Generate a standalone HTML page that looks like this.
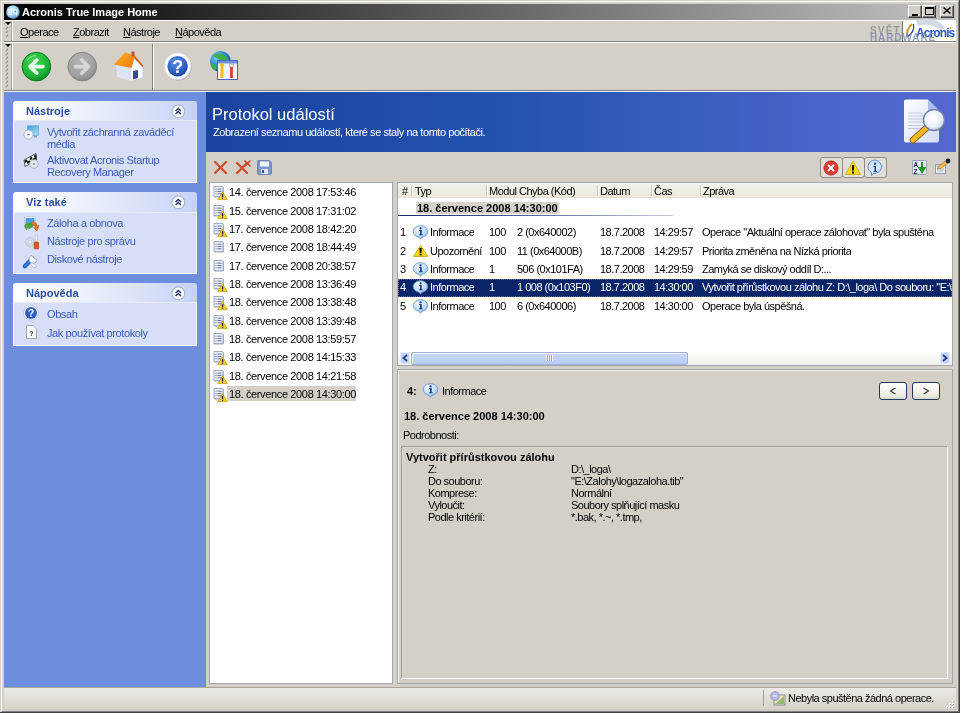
<!DOCTYPE html>
<html><head><meta charset="utf-8">
<style>
*{box-sizing:border-box;margin:0;padding:0}
html,body{width:960px;height:713px;overflow:hidden;background:#d4d0c8;font-family:"Liberation Sans",sans-serif;font-size:11px;color:#000}
.a{position:absolute}
body{will-change:transform}
.t{position:absolute;white-space:nowrap;line-height:13px;font-size:11px;letter-spacing:-0.5px}
.b{font-weight:bold;letter-spacing:0}
svg{position:absolute;overflow:visible}
</style></head><body>
<!-- window frame -->
<div class="a" style="left:0;top:0;width:960px;height:713px;border-top:1px solid #d4d0c8;border-left:1px solid #d4d0c8;"></div>
<div class="a" style="left:1px;top:1px;width:958px;height:711px;border-top:1px solid #fff;border-left:1px solid #fff;border-right:1px solid #808080;border-bottom:1px solid #808080"></div>
<div class="a" style="left:0;top:0;width:960px;height:713px;border-right:1px solid #404040;border-bottom:1px solid #404040"></div>

<!-- title bar -->
<div class="a" style="left:4px;top:4px;width:952px;height:16px;background:linear-gradient(to right,#000 0%,#c3c3c3 100%)"></div>
<svg style="left:6px;top:5px" width="14" height="14"><defs><radialGradient id="gi" cx="40%" cy="35%" r="70%"><stop offset="0" stop-color="#d8f2ff"/><stop offset="0.6" stop-color="#98cdf0"/><stop offset="1" stop-color="#4f8fc6"/></radialGradient></defs><circle cx="7" cy="7" r="6.8" fill="url(#gi)"/><path d="M3 4.5H5.5V9.5H3ZM3 7H5.5M7.5 5H11V8H7.5ZM10.5 8V10.5" fill="none" stroke="#e8fbff" stroke-width="1.2"/><rect x="8.5" y="6" width="1.5" height="1.2" fill="#4a9aa8"/></svg>
<div class="t b" style="left:22px;top:6px;color:#fff">Acronis True Image Home</div>
<!-- caption buttons -->
<div class="a" style="left:908px;top:5px;width:14px;height:13px;background:#d4d0c8;border-top:1px solid #fff;border-left:1px solid #fff;border-right:1px solid #404040;border-bottom:1px solid #404040;box-shadow:inset -1px -1px #808080"></div>
<div class="a" style="left:912px;top:14px;width:6px;height:2px;background:#000"></div>
<div class="a" style="left:922px;top:5px;width:14px;height:13px;background:#d4d0c8;border-top:1px solid #fff;border-left:1px solid #fff;border-right:1px solid #404040;border-bottom:1px solid #404040;box-shadow:inset -1px -1px #808080"></div>
<div class="a" style="left:925px;top:7px;width:9px;height:8px;border:1px solid #000;border-top-width:2px"></div>
<div class="a" style="left:940px;top:5px;width:14px;height:13px;background:#d4d0c8;border-top:1px solid #fff;border-left:1px solid #fff;border-right:1px solid #404040;border-bottom:1px solid #404040;box-shadow:inset -1px -1px #808080"></div>
<svg style="left:943px;top:7px" width="8" height="7"><path d="M0.5 0.5L7.5 6.5M7.5 0.5L0.5 6.5" stroke="#000" stroke-width="1.6"/></svg>

<!-- menu band -->
<div class="a" style="left:4px;top:20px;width:952px;height:1px;background:#fff"></div>
<div class="a" style="left:4px;top:41px;width:952px;height:1px;background:#808080"></div>
<div class="a" style="left:4px;top:42px;width:952px;height:1px;background:#fff"></div>
<div class="t" style="left:20px;top:26px"><u>O</u>perace</div>
<div class="t" style="left:73px;top:26px"><u>Z</u>obrazit</div>
<div class="t" style="left:123px;top:26px"><u>N</u>ástroje</div>
<div class="t" style="left:175px;top:26px"><u>N</u>ápověda</div>


<!-- acronis logo -->
<div class="a" style="left:902px;top:21px;width:54px;height:20px;background:#fff"></div>
<div class="a" style="left:902px;top:21px;width:1px;height:20px;background:#6e6e6e"></div>
<svg style="left:903px;top:21px" width="52" height="20"><path d="M14 2Q30 -2 40 8" fill="none" stroke="#cfd6e2" stroke-width="6" opacity="0.9"/><path d="M9 3Q3 9 4 15" fill="none" stroke="#d49a2a" stroke-width="2.2"/><path d="M10.5 3Q12 11 4 16" fill="none" stroke="#2a3f9a" stroke-width="1.2"/><text x="13" y="16" font-family="Liberation Sans" font-size="12" font-weight="bold" fill="#2b55c4" letter-spacing="-0.9">Acronis</text><circle cx="47.5" cy="7" r="1" fill="#a8c23a"/></svg>
<div class="t b" style="left:870px;top:25px;font-size:10px;line-height:11px;color:rgba(150,150,155,0.9);letter-spacing:1.2px">SVĚT</div>
<div class="t b" style="left:870px;top:32px;font-size:10px;line-height:11px;color:rgba(125,140,172,0.8);letter-spacing:0.9px">HARDWARE</div>
<!-- toolbar band -->
<div class="a" style="left:4px;top:90px;width:952px;height:1px;background:#808080"></div>
<div class="a" style="left:152px;top:44px;width:1px;height:46px;background:#808080"></div>
<div class="a" style="left:153px;top:44px;width:1px;height:46px;background:#fff"></div>


<!-- rebar grips -->
<div class="a" style="left:11px;top:21px;width:1px;height:20px;background:#a0a0a0"></div>
<div class="a" style="left:12px;top:21px;width:1px;height:20px;background:#fff"></div>
<div class="a" style="left:11px;top:43px;width:1px;height:47px;background:#a0a0a0"></div>
<div class="a" style="left:12px;top:43px;width:1px;height:47px;background:#fff"></div>
<svg style="left:5px;top:22px" width="6" height="4"><path d="M0 0H6L3 3Z" fill="#000"/></svg>
<svg style="left:5px;top:44px" width="6" height="4"><path d="M0 0H6L3 3Z" fill="#000"/></svg>



<svg style="left:0;top:0" width="12" height="100"><path d="M6 29L8 27M6 33L8 31M6 37L8 35" stroke="#8c8c8c" stroke-width="1.1"/></svg><svg style="left:0;top:0" width="12" height="100"><path d="M6 51L8 49M6 55L8 53M6 59L8 57M6 63L8 61M6 67L8 65M6 71L8 69M6 75L8 73M6 79L8 77M6 83L8 81M6 87L8 85" stroke="#8c8c8c" stroke-width="1.1"/></svg>
<!-- toolbar icons -->
<svg style="left:21px;top:52px" width="31" height="31"><defs><radialGradient id="gg" cx="40%" cy="30%" r="75%"><stop offset="0" stop-color="#3fd455"/><stop offset="0.7" stop-color="#1bb536"/><stop offset="1" stop-color="#0a8420"/></radialGradient></defs><circle cx="15.4" cy="14.6" r="14.3" fill="url(#gg)" stroke="#087a1a" stroke-width="1"/><path d="M6 9Q9 3.5 15 3.3" fill="none" stroke="#8ff09a" stroke-width="1.2" opacity="0.7"/><path d="M9 14.6H22M15.8 8L9 14.6L15.8 21.2" fill="none" stroke="#eaffea" stroke-width="3.6" stroke-linecap="round" stroke-linejoin="round"/></svg>
<svg style="left:67px;top:52px" width="31" height="31"><defs><radialGradient id="gr" cx="40%" cy="30%" r="75%"><stop offset="0" stop-color="#b4b4b4"/><stop offset="0.7" stop-color="#a0a0a0"/><stop offset="1" stop-color="#858585"/></radialGradient></defs><circle cx="15.3" cy="14.6" r="14.3" fill="url(#gr)" stroke="#848484" stroke-width="1"/><path d="M8.5 14.6H21.5M14.7 8L21.5 14.6L14.7 21.2" fill="none" stroke="#d6d6d6" stroke-width="3.6" stroke-linecap="round" stroke-linejoin="round"/></svg>
<svg style="left:113px;top:50px" width="32" height="33"><defs><linearGradient id="rf" x1="0" y1="0" x2="1" y2="1"><stop offset="0" stop-color="#ffb020"/><stop offset="1" stop-color="#f07a10"/></linearGradient></defs>
<path d="M3 15L18 17.5V31L4 27Z" fill="#dde4f4"/>
<path d="M18 17.5L21.5 7L29.5 16.5V27.5L18 31Z" fill="#ffffff"/>
<path d="M18 17.5L21.5 7L29.5 16.5V27.5L18 31Z" fill="none" stroke="#c9d2e6" stroke-width="0.6"/>
<path d="M1 14.5L12 2.5L22 6L18.5 18Z" fill="url(#rf)"/>
<path d="M22 6L30.5 16L29.5 17L21 8Z" fill="#c85a1c"/>
<rect x="18.5" y="1.5" width="3" height="5" fill="#c0502a"/>
<path d="M20 29.5V21L25 20V28Z" fill="#3b4a8a"/>
</svg>
<svg style="left:163px;top:52px" width="31" height="31"><defs><radialGradient id="gh" cx="40%" cy="30%" r="75%"><stop offset="0" stop-color="#5d8fe6"/><stop offset="0.65" stop-color="#2f5ec4"/><stop offset="1" stop-color="#1d3f9a"/></radialGradient></defs><circle cx="15.2" cy="14.9" r="13.5" fill="#6b6b6b" opacity="0.35"/><circle cx="14.6" cy="14.2" r="13.4" fill="#fbfdff" stroke="#c9d3e6" stroke-width="0.6"/><circle cx="14.6" cy="14.2" r="10.2" fill="url(#gh)"/><text x="14.8" y="20.6" text-anchor="middle" font-family="Liberation Sans" font-weight="bold" font-size="18" fill="#fff">?</text></svg>
<svg style="left:208px;top:50px" width="32" height="32"><defs><radialGradient id="gw" cx="35%" cy="30%" r="75%"><stop offset="0" stop-color="#7fdcff"/><stop offset="0.5" stop-color="#2a8ad8"/><stop offset="1" stop-color="#134f9e"/></radialGradient></defs><circle cx="12.5" cy="11.5" r="10.5" fill="url(#gw)"/><path d="M5 6Q9 2 14 4T20 9Q17 13 12 10T5 6Z" fill="#3fb046"/><path d="M3 14Q6 12 8 16T6 20Q3 18 3 14Z" fill="#3fb046"/>
<rect x="9.5" y="10.5" width="20" height="19" fill="#f4f6fc" stroke="#4668b8" stroke-width="1"/><rect x="10" y="11" width="19" height="2.5" fill="#6f8fd6"/>
<path d="M14 15V28" stroke="#f0c020" stroke-width="3"/><path d="M12 15.5Q14 13 16 15.5" stroke="#f0c020" stroke-width="2" fill="none"/>
<path d="M23.5 14V28" stroke="#d23a24" stroke-width="2.6"/><rect x="21.5" y="14" width="4" height="3" fill="#e8e8e8" stroke="#888" stroke-width="0.5"/></svg>

<!-- left task pane -->
<div class="a" style="left:4px;top:91px;width:952px;height:1px;background:#f4f4f8"></div><div class="a" style="left:4px;top:92px;width:202px;height:595px;background:#6d8ddf"></div>


<div class="a" style="left:13px;top:101px;width:184px;height:19px;border-radius:3px 3px 0 0;background:linear-gradient(to right,#fff 0%,#e9eefb 45%,#c6d3f7 100%)"></div>
<div class="a" style="left:13px;top:120px;width:184px;height:63px;background:#d6dff7;border:1px solid #fff;border-top:1px solid #e4eafb"></div>
<div class="t b" style="left:26px;top:105px;color:#2c4fa0">Nástroje</div>
<svg style="left:171px;top:104px" width="15" height="15"><circle cx="7.3" cy="7.3" r="6.4" fill="#fff" stroke="#aebad4" stroke-width="1.2"/><path d="M4.6 7L7.3 4.5L10 7M4.6 10L7.3 7.5L10 10" fill="none" stroke="#1f3163" stroke-width="1.4"/></svg>
<div class="a" style="left:13px;top:192px;width:184px;height:20px;border-radius:3px 3px 0 0;background:linear-gradient(to right,#fff 0%,#e9eefb 45%,#c6d3f7 100%)"></div>
<div class="a" style="left:13px;top:212px;width:184px;height:62px;background:#d6dff7;border:1px solid #fff;border-top:1px solid #e4eafb"></div>
<div class="t b" style="left:26px;top:196px;color:#2c4fa0">Viz také</div>
<svg style="left:171px;top:195px" width="15" height="15"><circle cx="7.3" cy="7.3" r="6.4" fill="#fff" stroke="#aebad4" stroke-width="1.2"/><path d="M4.6 7L7.3 4.5L10 7M4.6 10L7.3 7.5L10 10" fill="none" stroke="#1f3163" stroke-width="1.4"/></svg>
<div class="a" style="left:13px;top:283px;width:184px;height:19px;border-radius:3px 3px 0 0;background:linear-gradient(to right,#fff 0%,#e9eefb 45%,#c6d3f7 100%)"></div>
<div class="a" style="left:13px;top:302px;width:184px;height:44px;background:#d6dff7;border:1px solid #fff;border-top:1px solid #e4eafb"></div>
<div class="t b" style="left:26px;top:287px;color:#2c4fa0">Nápověda</div>
<svg style="left:171px;top:286px" width="15" height="15"><circle cx="7.3" cy="7.3" r="6.4" fill="#fff" stroke="#aebad4" stroke-width="1.2"/><path d="M4.6 7L7.3 4.5L10 7M4.6 10L7.3 7.5L10 10" fill="none" stroke="#1f3163" stroke-width="1.4"/></svg>
<div class="t" style="left:47px;top:126px;color:#3b5bb5;line-height:12px;letter-spacing:-0.4px">Vytvořit záchranná zaváděcí<br>média</div>
<div class="t" style="left:47px;top:154px;color:#3b5bb5;line-height:12px;letter-spacing:-0.4px">Aktivovat Acronis Startup<br>Recovery Manager</div>
<div class="t" style="left:47px;top:217px;color:#3b5bb5;letter-spacing:-0.4px">Záloha a obnova</div>
<div class="t" style="left:47px;top:235px;color:#3b5bb5;letter-spacing:-0.4px">Nástroje pro správu</div>
<div class="t" style="left:47px;top:253px;color:#3b5bb5;letter-spacing:-0.4px">Diskové nástroje</div>
<div class="t" style="left:47px;top:308px;color:#3b5bb5;letter-spacing:-0.4px">Obsah</div>
<div class="t" style="left:47px;top:327px;color:#3b5bb5;letter-spacing:-0.4px">Jak používat protokoly</div>
<!-- pane icons -->
<svg style="left:23px;top:125px" width="17" height="16"><defs><linearGradient id="scr" x1="0" y1="0" x2="1" y2="1"><stop offset="0" stop-color="#3d9bd8"/><stop offset="1" stop-color="#a9e4fa"/></linearGradient></defs><rect x="4.5" y="0.8" width="11" height="9.5" fill="url(#scr)" stroke="#6aa6d6" stroke-width="0.8"/><rect x="11" y="10.5" width="3" height="2" fill="#8aa4c0"/><circle cx="5.5" cy="9.6" r="4.6" fill="#f2f6fb" stroke="#93a9c6" stroke-width="0.8"/><rect x="4.3" y="9" width="2.4" height="1.2" fill="#6d7f99"/></svg>
<svg style="left:23px;top:153px" width="17" height="16"><path d="M1 7L13 0.5L13.5 7L2 13.5Z" fill="#fff" stroke="#1a1a1a" stroke-width="0.7"/><path d="M1.5 7.5L4 6.2L4.5 8.6L2 10ZM6.5 4.8L9 3.5L9.4 5.9L6.9 7.2ZM11 2.4L13.1 1.3L13.3 3.7L11.3 4.8ZM4 8.6L6.9 7.2L7.2 9.6L4.3 11ZM9.4 5.9L13.3 3.7L13.4 6L9.8 8.3Z" fill="#111"/><circle cx="11" cy="11" r="4.3" fill="#e6e9ee" stroke="#9aa2ae" stroke-width="0.8"/><circle cx="11" cy="11" r="1" fill="#7a828e"/></svg>
<svg style="left:23px;top:216px" width="17" height="17"><rect x="1.5" y="1" width="11" height="10" fill="#fff" stroke="#b9c2d6" stroke-width="0.7"/><rect x="2.5" y="2" width="9" height="8" fill="#4aa0e8"/><rect x="2.5" y="7" width="9" height="3" fill="#5fb85a"/><path d="M1.5 10Q3 7 7 8.5L6.5 7L10 10.5L5.5 13L6.5 11Q4 10.5 3.5 14Z" fill="#4cae3a" stroke="#2f7a22" stroke-width="0.5"/><path d="M8.5 6Q13 5 14.5 10L16 9.5L14 15L10.5 11.5L12.5 11.2Q11.5 8 8.5 8.5Z" fill="#e8762a" stroke="#a94d14" stroke-width="0.5"/></svg>
<svg style="left:23px;top:234px" width="17" height="17"><circle cx="7" cy="8" r="5" fill="none" stroke="#d7dbe4" stroke-width="2.6" stroke-dasharray="2.2 1.3"/><circle cx="7" cy="8" r="4.2" fill="none" stroke="#aeb4c2" stroke-width="0.6"/><circle cx="7" cy="8" r="2" fill="#eef0f5" stroke="#aeb4c2" stroke-width="0.6"/><rect x="12.3" y="1" width="2" height="7" rx="1" fill="#f2f2f5" stroke="#a8adb8" stroke-width="0.5"/><rect x="11" y="8" width="4.6" height="7" rx="1" fill="#e0541e" stroke="#a83a12" stroke-width="0.5"/></svg>
<svg style="left:23px;top:252px" width="17" height="17"><path d="M9 10L14 14.5Q12 16.5 10 15L6 11Z" fill="#f4f6fa" stroke="#9aa3b5" stroke-width="0.6"/><path d="M1.8 14.2L9.5 6.5" stroke="#1d5cb8" stroke-width="4.2" stroke-linecap="round"/><path d="M1.8 14.2L9.5 6.5" stroke="#3f8fe0" stroke-width="1.6" stroke-linecap="round"/><path d="M9 3.5A4 4 0 1 0 14 7.5L12 7L10.5 5.5Z" fill="#f4f6fa" stroke="#8d97ab" stroke-width="0.7"/></svg>
<svg style="left:23px;top:305px" width="16" height="16"><circle cx="8" cy="8" r="7.3" fill="#fff" stroke="#9fb0cf" stroke-width="0.6"/><circle cx="8" cy="8" r="6" fill="#2f5fc4"/><text x="8" y="12" text-anchor="middle" font-family="Liberation Sans" font-weight="bold" font-size="10" fill="#fff">?</text></svg>
<svg style="left:24px;top:324px" width="16" height="16"><path d="M2.5 1.5H9L12.5 5V14.5H2.5Z" fill="#fff" stroke="#8c94a4" stroke-width="0.8"/><text x="7.3" y="12" text-anchor="middle" font-family="Liberation Sans" font-weight="bold" font-size="7" fill="#333">?</text></svg>

<!-- header -->
<div class="a" style="left:206px;top:92px;width:750px;height:60px;background:linear-gradient(to right,#1a449f 0%,#2452b0 40%,#4a66cc 85%,#5468cf 100%)"></div>
<div class="t" style="left:212px;top:105px;font-size:16.5px;line-height:19px;color:#fff;letter-spacing:0">Protokol událostí</div>
<div class="t" style="left:213px;top:126px;color:#fff;letter-spacing:-0.45px">Zobrazení seznamu událostí, které se staly na tomto počítači.</div>


<svg style="left:903px;top:98px" width="50" height="48"><defs><linearGradient id="dg" x1="0" y1="0" x2="1" y2="1"><stop offset="0" stop-color="#ffffff"/><stop offset="1" stop-color="#d5dcf6"/></linearGradient><radialGradient id="mg" cx="45%" cy="40%" r="60%"><stop offset="0" stop-color="#ffffff"/><stop offset="0.7" stop-color="#e8f0fb"/><stop offset="1" stop-color="#b9c9e6"/></radialGradient></defs>
<path d="M3 1.5H25L36 12.5V42.5Q36 44.5 34 44.5H3Q1 44.5 1 42.5V3.5Q1 1.5 3 1.5Z" fill="url(#dg)"/>
<path d="M25 1.5L36 12.5H27Q25 12.5 25 10.5Z" fill="#aebcec"/>
<path d="M5 15H20M5 18H20M5 21H20M5 24H20M5 27.5H20M5 30.5H18" stroke="#c2cbe6" stroke-width="1"/>
<path d="M24.5 29L10 42" stroke="#8a5a10" stroke-width="6.5" stroke-linecap="round"/>
<path d="M24.5 29L10 42" stroke="#f6b822" stroke-width="5" stroke-linecap="round"/>
<circle cx="31" cy="22" r="10.5" fill="url(#mg)" stroke="#6f7fb0" stroke-width="1.3"/>
</svg>

<!-- body -->
<!-- list box -->
<div class="a" style="left:209px;top:182px;width:184px;height:502px;background:#fff;border:1px solid #a2a6ad"></div>
<!-- table -->
<div class="a" style="left:397px;top:182px;width:556px;height:184px;background:#fff;border:1px solid #a2a6ad"></div>
<!-- details pane -->
<div class="a" style="left:397px;top:369px;width:556px;height:315px;border:1px solid #a2a6ad;box-shadow:inset 1px 1px #f4f3ef"></div>

<!-- body toolbar -->
<svg style="left:213px;top:160px" width="16" height="16"><path d="M2 2L13 13M13 2L2 13" stroke="#d24b2c" stroke-width="2.3" stroke-linecap="round"/></svg>
<svg style="left:235px;top:159px" width="17" height="17"><path d="M2 4L12 14M12 4L2 14" stroke="#d24b2c" stroke-width="2.3" stroke-linecap="round"/><path d="M9.5 1.5L15.5 7.5M15.5 1.5L9.5 7.5" stroke="#c8462a" stroke-width="1.5"/></svg>
<svg style="left:257px;top:160px" width="15" height="15"><path d="M0.5 1.5Q0.5 0.5 1.5 0.5H12.5L14.5 2.5V13.5Q14.5 14.5 13.5 14.5H1.5Q0.5 14.5 0.5 13.5Z" fill="#7d93cc" stroke="#6379b3" stroke-width="0.8"/><rect x="3" y="1.5" width="9" height="5" fill="#f4f6fb"/><rect x="4" y="9" width="7" height="5" fill="#dfe5f3"/><rect x="5" y="10" width="2" height="3" fill="#3a4d80"/></svg>

<div class="a" style="left:820px;top:157px;width:23px;height:21px;border:1px solid #8f8c86;border-radius:3px;background:#e2dfd8"></div>
<div class="a" style="left:842px;top:157px;width:23px;height:21px;border:1px solid #8f8c86;border-radius:3px;background:#e2dfd8"></div>
<div class="a" style="left:864px;top:157px;width:23px;height:21px;border:1px solid #8f8c86;border-radius:3px;background:#e2dfd8"></div>
<svg style="left:823px;top:160px" width="16" height="16"><circle cx="8" cy="8" r="7.2" fill="#d93a2e" stroke="#a8241c" stroke-width="0.6"/><path d="M5 5L11 11M11 5L5 11" stroke="#fff" stroke-width="2.2"/></svg>
<svg style="left:845px;top:160px" width="16" height="16"><path d="M8 1L15.5 14.5H0.5Z" fill="#f7dc1e" stroke="#c7a000" stroke-width="0.7"/><rect x="7" y="5" width="2" height="5.5" fill="#111"/><rect x="7" y="11.5" width="2" height="2" fill="#111"/></svg>
<svg style="left:866px;top:159px" width="18" height="17"><path d="M9 1A7.5 6.8 0 1 1 7 14.5L5.5 16.5L5.5 13.5A7.5 6.8 0 0 1 9 1Z" fill="#cfe6fb" stroke="#3f78c4" stroke-width="0.8"/><circle cx="9" cy="4.6" r="1.2" fill="#1a3f93"/><path d="M7.5 7H10V12H11V13H7.5V12H8.5V8H7.5Z" fill="#1a3f93"/></svg>
<svg style="left:912px;top:160px" width="15" height="15"><rect x="0.5" y="0.5" width="14" height="14" fill="#e2e8f4" stroke="#8895b0" stroke-width="0.8" rx="1"/><text x="1.5" y="7" font-family="Liberation Sans" font-weight="bold" font-size="6.5" fill="#223">A</text><text x="1.5" y="13.5" font-family="Liberation Sans" font-weight="bold" font-size="6.5" fill="#223">Z</text><path d="M10 2V10M7.5 8L10 12L12.5 8Z" stroke="#1c9a2a" stroke-width="2" fill="#1c9a2a"/></svg>
<svg style="left:934px;top:158px" width="17" height="17"><path d="M1.5 6.5H11.5V15.5H1.5Z" fill="#eef1f8" stroke="#8a93aa" stroke-width="0.9"/><rect x="2" y="7" width="9" height="2" fill="#c5cde3"/><path d="M3 11H10M3 13H9" stroke="#9aa6c6" stroke-width="0.9"/><path d="M4 9L11 3L13.5 5L7 10.5L3.5 11Z" fill="#f3b845" stroke="#a8741d" stroke-width="0.6"/><circle cx="14" cy="3" r="2.4" fill="#15224a"/></svg>

<!-- list box items -->
<svg style="left:213px;top:186px" width="15" height="15"><path d="M1 0.5H9.5L10.5 1.5V11H1Z" fill="#eaeef7" stroke="#8d97b3" stroke-width="0.8"/><path d="M10 1.5V10.5H1.5" fill="none" stroke="#aab2c8" stroke-width="1"/><path d="M2.5 3.2H3.5M4.5 3.2H8.5M2.5 5.5H3.5M4.5 5.5H8.5M2.5 7.8H3.5M4.5 7.8H8.5" stroke="#56689a" stroke-width="0.9"/><path d="M9.5 5.8L14.3 13.6H4.7Z" fill="#f3d41c" stroke="#b39300" stroke-width="0.7" stroke-linejoin="round"/><rect x="8.9" y="8.2" width="1.3" height="2.8" fill="#1a1a1a"/><rect x="8.9" y="11.6" width="1.3" height="1.2" fill="#1a1a1a"/></svg>
<div class="t" style="left:229px;top:186px;letter-spacing:-0.36px">14. července 2008 17:53:46</div>
<svg style="left:213px;top:205px" width="15" height="15"><path d="M1 0.5H9.5L10.5 1.5V11H1Z" fill="#eaeef7" stroke="#8d97b3" stroke-width="0.8"/><path d="M10 1.5V10.5H1.5" fill="none" stroke="#aab2c8" stroke-width="1"/><path d="M2.5 3.2H3.5M4.5 3.2H8.5M2.5 5.5H3.5M4.5 5.5H8.5M2.5 7.8H3.5M4.5 7.8H8.5" stroke="#56689a" stroke-width="0.9"/><path d="M9.5 5.8L14.3 13.6H4.7Z" fill="#f3d41c" stroke="#b39300" stroke-width="0.7" stroke-linejoin="round"/><rect x="8.9" y="8.2" width="1.3" height="2.8" fill="#1a1a1a"/><rect x="8.9" y="11.6" width="1.3" height="1.2" fill="#1a1a1a"/></svg>
<div class="t" style="left:229px;top:205px;letter-spacing:-0.36px">15. července 2008 17:31:02</div>
<svg style="left:213px;top:223px" width="15" height="15"><path d="M1 0.5H9.5L10.5 1.5V11H1Z" fill="#eaeef7" stroke="#8d97b3" stroke-width="0.8"/><path d="M10 1.5V10.5H1.5" fill="none" stroke="#aab2c8" stroke-width="1"/><path d="M2.5 3.2H3.5M4.5 3.2H8.5M2.5 5.5H3.5M4.5 5.5H8.5M2.5 7.8H3.5M4.5 7.8H8.5" stroke="#56689a" stroke-width="0.9"/><path d="M9.5 5.8L14.3 13.6H4.7Z" fill="#f3d41c" stroke="#b39300" stroke-width="0.7" stroke-linejoin="round"/><rect x="8.9" y="8.2" width="1.3" height="2.8" fill="#1a1a1a"/><rect x="8.9" y="11.6" width="1.3" height="1.2" fill="#1a1a1a"/></svg>
<div class="t" style="left:229px;top:223px;letter-spacing:-0.36px">17. července 2008 18:42:20</div>
<svg style="left:213px;top:241px" width="15" height="15"><path d="M1 0.5H9.5L10.5 1.5V11H1Z" fill="#eaeef7" stroke="#8d97b3" stroke-width="0.8"/><path d="M10 1.5V10.5H1.5" fill="none" stroke="#aab2c8" stroke-width="1"/><path d="M2.5 3.2H3.5M4.5 3.2H8.5M2.5 5.5H3.5M4.5 5.5H8.5M2.5 7.8H3.5M4.5 7.8H8.5" stroke="#56689a" stroke-width="0.9"/></svg>
<div class="t" style="left:229px;top:241px;letter-spacing:-0.36px">17. července 2008 18:44:49</div>
<svg style="left:213px;top:260px" width="15" height="15"><path d="M1 0.5H9.5L10.5 1.5V11H1Z" fill="#eaeef7" stroke="#8d97b3" stroke-width="0.8"/><path d="M10 1.5V10.5H1.5" fill="none" stroke="#aab2c8" stroke-width="1"/><path d="M2.5 3.2H3.5M4.5 3.2H8.5M2.5 5.5H3.5M4.5 5.5H8.5M2.5 7.8H3.5M4.5 7.8H8.5" stroke="#56689a" stroke-width="0.9"/></svg>
<div class="t" style="left:229px;top:260px;letter-spacing:-0.36px">17. července 2008 20:38:57</div>
<svg style="left:213px;top:278px" width="15" height="15"><path d="M1 0.5H9.5L10.5 1.5V11H1Z" fill="#eaeef7" stroke="#8d97b3" stroke-width="0.8"/><path d="M10 1.5V10.5H1.5" fill="none" stroke="#aab2c8" stroke-width="1"/><path d="M2.5 3.2H3.5M4.5 3.2H8.5M2.5 5.5H3.5M4.5 5.5H8.5M2.5 7.8H3.5M4.5 7.8H8.5" stroke="#56689a" stroke-width="0.9"/><path d="M9.5 5.8L14.3 13.6H4.7Z" fill="#f3d41c" stroke="#b39300" stroke-width="0.7" stroke-linejoin="round"/><rect x="8.9" y="8.2" width="1.3" height="2.8" fill="#1a1a1a"/><rect x="8.9" y="11.6" width="1.3" height="1.2" fill="#1a1a1a"/></svg>
<div class="t" style="left:229px;top:278px;letter-spacing:-0.36px">18. července 2008 13:36:49</div>
<svg style="left:213px;top:296px" width="15" height="15"><path d="M1 0.5H9.5L10.5 1.5V11H1Z" fill="#eaeef7" stroke="#8d97b3" stroke-width="0.8"/><path d="M10 1.5V10.5H1.5" fill="none" stroke="#aab2c8" stroke-width="1"/><path d="M2.5 3.2H3.5M4.5 3.2H8.5M2.5 5.5H3.5M4.5 5.5H8.5M2.5 7.8H3.5M4.5 7.8H8.5" stroke="#56689a" stroke-width="0.9"/><path d="M9.5 5.8L14.3 13.6H4.7Z" fill="#f3d41c" stroke="#b39300" stroke-width="0.7" stroke-linejoin="round"/><rect x="8.9" y="8.2" width="1.3" height="2.8" fill="#1a1a1a"/><rect x="8.9" y="11.6" width="1.3" height="1.2" fill="#1a1a1a"/></svg>
<div class="t" style="left:229px;top:296px;letter-spacing:-0.36px">18. července 2008 13:38:48</div>
<svg style="left:213px;top:315px" width="15" height="15"><path d="M1 0.5H9.5L10.5 1.5V11H1Z" fill="#eaeef7" stroke="#8d97b3" stroke-width="0.8"/><path d="M10 1.5V10.5H1.5" fill="none" stroke="#aab2c8" stroke-width="1"/><path d="M2.5 3.2H3.5M4.5 3.2H8.5M2.5 5.5H3.5M4.5 5.5H8.5M2.5 7.8H3.5M4.5 7.8H8.5" stroke="#56689a" stroke-width="0.9"/><path d="M9.5 5.8L14.3 13.6H4.7Z" fill="#f3d41c" stroke="#b39300" stroke-width="0.7" stroke-linejoin="round"/><rect x="8.9" y="8.2" width="1.3" height="2.8" fill="#1a1a1a"/><rect x="8.9" y="11.6" width="1.3" height="1.2" fill="#1a1a1a"/></svg>
<div class="t" style="left:229px;top:315px;letter-spacing:-0.36px">18. července 2008 13:39:48</div>
<svg style="left:213px;top:333px" width="15" height="15"><path d="M1 0.5H9.5L10.5 1.5V11H1Z" fill="#eaeef7" stroke="#8d97b3" stroke-width="0.8"/><path d="M10 1.5V10.5H1.5" fill="none" stroke="#aab2c8" stroke-width="1"/><path d="M2.5 3.2H3.5M4.5 3.2H8.5M2.5 5.5H3.5M4.5 5.5H8.5M2.5 7.8H3.5M4.5 7.8H8.5" stroke="#56689a" stroke-width="0.9"/></svg>
<div class="t" style="left:229px;top:333px;letter-spacing:-0.36px">18. července 2008 13:59:57</div>
<svg style="left:213px;top:351px" width="15" height="15"><path d="M1 0.5H9.5L10.5 1.5V11H1Z" fill="#eaeef7" stroke="#8d97b3" stroke-width="0.8"/><path d="M10 1.5V10.5H1.5" fill="none" stroke="#aab2c8" stroke-width="1"/><path d="M2.5 3.2H3.5M4.5 3.2H8.5M2.5 5.5H3.5M4.5 5.5H8.5M2.5 7.8H3.5M4.5 7.8H8.5" stroke="#56689a" stroke-width="0.9"/><path d="M9.5 5.8L14.3 13.6H4.7Z" fill="#f3d41c" stroke="#b39300" stroke-width="0.7" stroke-linejoin="round"/><rect x="8.9" y="8.2" width="1.3" height="2.8" fill="#1a1a1a"/><rect x="8.9" y="11.6" width="1.3" height="1.2" fill="#1a1a1a"/></svg>
<div class="t" style="left:229px;top:351px;letter-spacing:-0.36px">18. července 2008 14:15:33</div>
<svg style="left:213px;top:370px" width="15" height="15"><path d="M1 0.5H9.5L10.5 1.5V11H1Z" fill="#eaeef7" stroke="#8d97b3" stroke-width="0.8"/><path d="M10 1.5V10.5H1.5" fill="none" stroke="#aab2c8" stroke-width="1"/><path d="M2.5 3.2H3.5M4.5 3.2H8.5M2.5 5.5H3.5M4.5 5.5H8.5M2.5 7.8H3.5M4.5 7.8H8.5" stroke="#56689a" stroke-width="0.9"/><path d="M9.5 5.8L14.3 13.6H4.7Z" fill="#f3d41c" stroke="#b39300" stroke-width="0.7" stroke-linejoin="round"/><rect x="8.9" y="8.2" width="1.3" height="2.8" fill="#1a1a1a"/><rect x="8.9" y="11.6" width="1.3" height="1.2" fill="#1a1a1a"/></svg>
<div class="t" style="left:229px;top:370px;letter-spacing:-0.36px">18. července 2008 14:21:58</div>
<svg style="left:213px;top:388px" width="15" height="15"><path d="M1 0.5H9.5L10.5 1.5V11H1Z" fill="#eaeef7" stroke="#8d97b3" stroke-width="0.8"/><path d="M10 1.5V10.5H1.5" fill="none" stroke="#aab2c8" stroke-width="1"/><path d="M2.5 3.2H3.5M4.5 3.2H8.5M2.5 5.5H3.5M4.5 5.5H8.5M2.5 7.8H3.5M4.5 7.8H8.5" stroke="#56689a" stroke-width="0.9"/><path d="M9.5 5.8L14.3 13.6H4.7Z" fill="#f3d41c" stroke="#b39300" stroke-width="0.7" stroke-linejoin="round"/><rect x="8.9" y="8.2" width="1.3" height="2.8" fill="#1a1a1a"/><rect x="8.9" y="11.6" width="1.3" height="1.2" fill="#1a1a1a"/></svg>
<div class="a" style="left:227px;top:386px;width:129px;height:15px;background:#d4d0c8"></div>
<div class="t" style="left:229px;top:388px;letter-spacing:-0.36px">18. července 2008 14:30:00</div>

<!-- table content -->
<div class="a" style="left:398px;top:183px;width:554px;height:15px;background:linear-gradient(#f3f2ec,#ebeadb);border-bottom:1px solid #d0cdbf"></div>
<div class="a" style="left:398px;top:197px;width:554px;height:1px;background:#e2dfd0"></div>
<div class="a" style="left:411px;top:185px;width:1px;height:11px;background:#cbc7b8"></div><div class="a" style="left:412px;top:185px;width:1px;height:11px;background:#fff"></div>
<div class="a" style="left:486px;top:185px;width:1px;height:11px;background:#cbc7b8"></div><div class="a" style="left:487px;top:185px;width:1px;height:11px;background:#fff"></div>
<div class="a" style="left:597px;top:185px;width:1px;height:11px;background:#cbc7b8"></div><div class="a" style="left:598px;top:185px;width:1px;height:11px;background:#fff"></div>
<div class="a" style="left:651px;top:185px;width:1px;height:11px;background:#cbc7b8"></div><div class="a" style="left:652px;top:185px;width:1px;height:11px;background:#fff"></div>
<div class="a" style="left:700px;top:185px;width:1px;height:11px;background:#cbc7b8"></div><div class="a" style="left:701px;top:185px;width:1px;height:11px;background:#fff"></div>
<div class="t" style="left:402px;top:185px">#</div>
<div class="t" style="left:415px;top:185px">Typ</div>
<div class="t" style="left:489px;top:185px">Modul</div>
<div class="t" style="left:519px;top:185px">Chyba (Kód)</div>
<div class="t" style="left:600px;top:185px">Datum</div>
<div class="t" style="left:654px;top:185px">Čas</div>
<div class="t" style="left:703px;top:185px">Zpráva</div>
<div class="a" style="left:416px;top:202px;width:143px;height:12px;background:#d6d3cc"></div>
<div class="t b" style="left:417px;top:202px">18. července 2008 14:30:00</div>
<div class="a" style="left:398px;top:215px;width:275px;height:1px;background:linear-gradient(to right,#1d2a6a,#4a5490 40%,#c9cbd8 100%)"></div>
<div class="a" style="left:398px;top:279px;width:554px;height:18px;background:#0a246a;outline:1px dotted #6d6d6d;outline-offset:-1px"></div>
<svg style="left:413px;top:225px" width="16" height="16"><defs><radialGradient id="igr0" cx="40%" cy="30%" r="70%"><stop offset="0" stop-color="#f6fbff"/><stop offset="0.65" stop-color="#bcdcf7"/><stop offset="1" stop-color="#86b6e6"/></radialGradient></defs><path d="M7.5 0.7C11.6 0.7 14.8 3.3 14.8 6.5C14.8 9.4 12.3 11.6 9 12.2L7.5 14.2L6 12.2C2.7 11.6 0.2 9.4 0.2 6.5C0.2 3.3 3.4 0.7 7.5 0.7Z" fill="url(#igr0)" stroke="#5a8fd0" stroke-width="0.8"/><circle cx="7.6" cy="3.3" r="1.1" fill="#16348a"/><path d="M6.2 5H8.7V9.3H9.6V10.3H6.2V9.3H7.1V6H6.2Z" fill="#16348a"/></svg>
<div class="t" style="left:400px;top:226px;color:#000">1</div>
<div class="t" style="left:430px;top:226px;color:#000;max-width:56px;overflow:hidden">Informace</div>
<div class="t" style="left:489px;top:226px;color:#000">100</div>
<div class="t" style="left:517px;top:226px;color:#000">2 (0x640002)</div>
<div class="t" style="left:600px;top:226px;color:#000">18.7.2008</div>
<div class="t" style="left:654px;top:226px;color:#000">14:29:57</div>
<div class="t" style="left:702px;top:226px;color:#000;max-width:250px;overflow:hidden">Operace "Aktuální operace zálohovat" byla spuštěna</div>
<svg style="left:413px;top:245px" width="16" height="16"><path d="M7.6 0.6L14.8 11.4H0.4Z" fill="#f8d81a" stroke="#c09a00" stroke-width="0.8" stroke-linejoin="round"/><path d="M6.4 3H8.8L8.4 7.9H6.8Z" fill="#111"/><rect x="6.7" y="8.6" width="1.9" height="1.8" fill="#111"/></svg>
<div class="t" style="left:400px;top:245px;color:#000">2</div>
<div class="t" style="left:430px;top:245px;color:#000;max-width:56px;overflow:hidden">Upozornění</div>
<div class="t" style="left:489px;top:245px;color:#000">100</div>
<div class="t" style="left:517px;top:245px;color:#000">11 (0x64000B)</div>
<div class="t" style="left:600px;top:245px;color:#000">18.7.2008</div>
<div class="t" style="left:654px;top:245px;color:#000">14:29:57</div>
<div class="t" style="left:702px;top:245px;color:#000;max-width:250px;overflow:hidden">Priorita změněna na Nízká priorita</div>
<svg style="left:413px;top:262px" width="16" height="16"><defs><radialGradient id="igr2" cx="40%" cy="30%" r="70%"><stop offset="0" stop-color="#f6fbff"/><stop offset="0.65" stop-color="#bcdcf7"/><stop offset="1" stop-color="#86b6e6"/></radialGradient></defs><path d="M7.5 0.7C11.6 0.7 14.8 3.3 14.8 6.5C14.8 9.4 12.3 11.6 9 12.2L7.5 14.2L6 12.2C2.7 11.6 0.2 9.4 0.2 6.5C0.2 3.3 3.4 0.7 7.5 0.7Z" fill="url(#igr2)" stroke="#5a8fd0" stroke-width="0.8"/><circle cx="7.6" cy="3.3" r="1.1" fill="#16348a"/><path d="M6.2 5H8.7V9.3H9.6V10.3H6.2V9.3H7.1V6H6.2Z" fill="#16348a"/></svg>
<div class="t" style="left:400px;top:263px;color:#000">3</div>
<div class="t" style="left:430px;top:263px;color:#000;max-width:56px;overflow:hidden">Informace</div>
<div class="t" style="left:489px;top:263px;color:#000">1</div>
<div class="t" style="left:517px;top:263px;color:#000">506 (0x101FA)</div>
<div class="t" style="left:600px;top:263px;color:#000">18.7.2008</div>
<div class="t" style="left:654px;top:263px;color:#000">14:29:59</div>
<div class="t" style="left:702px;top:263px;color:#000;max-width:250px;overflow:hidden">Zamyká se diskový oddíl D:...</div>
<svg style="left:413px;top:280px" width="16" height="16"><defs><radialGradient id="igr3" cx="40%" cy="30%" r="70%"><stop offset="0" stop-color="#f6fbff"/><stop offset="0.65" stop-color="#bcdcf7"/><stop offset="1" stop-color="#86b6e6"/></radialGradient></defs><path d="M7.5 0.7C11.6 0.7 14.8 3.3 14.8 6.5C14.8 9.4 12.3 11.6 9 12.2L7.5 14.2L6 12.2C2.7 11.6 0.2 9.4 0.2 6.5C0.2 3.3 3.4 0.7 7.5 0.7Z" fill="url(#igr3)" stroke="#5a8fd0" stroke-width="0.8"/><circle cx="7.6" cy="3.3" r="1.1" fill="#16348a"/><path d="M6.2 5H8.7V9.3H9.6V10.3H6.2V9.3H7.1V6H6.2Z" fill="#16348a"/></svg>
<div class="t" style="left:400px;top:281px;color:#fff">4</div>
<div class="t" style="left:430px;top:281px;color:#fff;max-width:56px;overflow:hidden">Informace</div>
<div class="t" style="left:489px;top:281px;color:#fff">1</div>
<div class="t" style="left:517px;top:281px;color:#fff">1 008 (0x103F0)</div>
<div class="t" style="left:600px;top:281px;color:#fff">18.7.2008</div>
<div class="t" style="left:654px;top:281px;color:#fff">14:30:00</div>
<div class="t" style="left:702px;top:281px;color:#fff;max-width:250px;overflow:hidden">Vytvořit přírůstkovou zálohu Z: D:\_loga\ Do souboru: "E:\Zalohy\logazaloha.tib"</div>
<svg style="left:413px;top:299px" width="16" height="16"><defs><radialGradient id="igr4" cx="40%" cy="30%" r="70%"><stop offset="0" stop-color="#f6fbff"/><stop offset="0.65" stop-color="#bcdcf7"/><stop offset="1" stop-color="#86b6e6"/></radialGradient></defs><path d="M7.5 0.7C11.6 0.7 14.8 3.3 14.8 6.5C14.8 9.4 12.3 11.6 9 12.2L7.5 14.2L6 12.2C2.7 11.6 0.2 9.4 0.2 6.5C0.2 3.3 3.4 0.7 7.5 0.7Z" fill="url(#igr4)" stroke="#5a8fd0" stroke-width="0.8"/><circle cx="7.6" cy="3.3" r="1.1" fill="#16348a"/><path d="M6.2 5H8.7V9.3H9.6V10.3H6.2V9.3H7.1V6H6.2Z" fill="#16348a"/></svg>
<div class="t" style="left:400px;top:300px;color:#000">5</div>
<div class="t" style="left:430px;top:300px;color:#000;max-width:56px;overflow:hidden">Informace</div>
<div class="t" style="left:489px;top:300px;color:#000">100</div>
<div class="t" style="left:517px;top:300px;color:#000">6 (0x640006)</div>
<div class="t" style="left:600px;top:300px;color:#000">18.7.2008</div>
<div class="t" style="left:654px;top:300px;color:#000">14:30:00</div>
<div class="t" style="left:702px;top:300px;color:#000;max-width:250px;overflow:hidden">Operace byla úspěšná.</div>
<div class="a" style="left:398px;top:351px;width:554px;height:14px;background:linear-gradient(#fefefb,#f1efe7)"></div>
<div class="a" style="left:400px;top:352px;width:10px;height:12px;background:#c3d4fb;border:1px solid #e5ecfd"></div>
<svg style="left:401px;top:354px" width="8" height="8"><path d="M6 1L2.5 4L6 7" fill="none" stroke="#283f84" stroke-width="1.8"/></svg>
<div class="a" style="left:411px;top:352px;width:277px;height:13px;border-radius:2px;background:linear-gradient(#c9d8fd,#b8cbf9);border:1px solid #9db0e0;box-shadow:inset 1px 1px #eef3ff"></div>
<div class="a" style="left:546px;top:355px;width:7px;height:6px;background:repeating-linear-gradient(to right,#eef3ff 0 1px,#8ea6dd 1px 2px)"></div>
<div class="a" style="left:940px;top:352px;width:10px;height:12px;background:#c3d4fb;border:1px solid #e5ecfd"></div>
<svg style="left:941px;top:354px" width="8" height="8"><path d="M2 1L5.5 4L2 7" fill="none" stroke="#283f84" stroke-width="1.8"/></svg>

<!-- details content -->
<div class="t b" style="left:407px;top:385px">4:</div>
<svg style="left:423px;top:383px" width="16" height="16"><defs><radialGradient id="igd" cx="40%" cy="30%" r="70%"><stop offset="0" stop-color="#f6fbff"/><stop offset="0.65" stop-color="#bcdcf7"/><stop offset="1" stop-color="#86b6e6"/></radialGradient></defs><path d="M7.5 0.7C11.6 0.7 14.8 3.3 14.8 6.5C14.8 9.4 12.3 11.6 9 12.2L7.5 14.2L6 12.2C2.7 11.6 0.2 9.4 0.2 6.5C0.2 3.3 3.4 0.7 7.5 0.7Z" fill="url(#igd)" stroke="#5a8fd0" stroke-width="0.8"/><circle cx="7.6" cy="3.3" r="1.1" fill="#16348a"/><path d="M6.2 5H8.7V9.3H9.6V10.3H6.2V9.3H7.1V6H6.2Z" fill="#16348a"/></svg>
<div class="t" style="left:442px;top:385px">Informace</div>
<div class="a" style="left:879px;top:382px;width:28px;height:18px;border:1px solid #1f3a5c;border-radius:3px;background:linear-gradient(#fff,#eceae2 80%,#d9d6cc)"></div>
<div class="a" style="left:912px;top:382px;width:28px;height:18px;border:1px solid #1f3a5c;border-radius:3px;background:linear-gradient(#fff,#eceae2 80%,#d9d6cc)"></div>
<svg style="left:889px;top:387px" width="8" height="8"><path d="M6.5 1L1.5 4L6.5 7" fill="none" stroke="#333" stroke-width="1.1"/></svg>
<svg style="left:922px;top:387px" width="8" height="8"><path d="M1.5 1L6.5 4L1.5 7" fill="none" stroke="#333" stroke-width="1.1"/></svg>
<div class="t b" style="left:404px;top:410px">18. července 2008 14:30:00</div>
<div class="t" style="left:403px;top:429px">Podrobnosti:</div>
<div class="a" style="left:401px;top:446px;width:547px;height:233px;border:1px solid #a09d94;border-right-color:#fff;border-bottom-color:#fff;box-shadow:inset 1px 1px #d9d6ce"></div>
<div class="t b" style="left:406px;top:451px">Vytvořit přírůstkovou zálohu</div>
<div class="t" style="left:428px;top:463px;line-height:12px">Z:</div><div class="t" style="left:571px;top:463px;line-height:12px">D:\_loga\</div>
<div class="t" style="left:428px;top:475px;line-height:12px">Do souboru:</div><div class="t" style="left:571px;top:475px;line-height:12px">"E:\Zalohy\logazaloha.tib"</div>
<div class="t" style="left:428px;top:487px;line-height:12px">Komprese:</div><div class="t" style="left:571px;top:487px;line-height:12px">Normální</div>
<div class="t" style="left:428px;top:499px;line-height:12px">Vyloučit:</div><div class="t" style="left:571px;top:499px;line-height:12px">Soubory splňující masku</div>
<div class="t" style="left:428px;top:511px;line-height:12px">Podle kritérií:</div><div class="t" style="left:571px;top:511px;line-height:12px">*.bak, *.~, *.tmp,</div>

<!-- status bar -->
<div class="a" style="left:4px;top:687px;width:952px;height:1px;background:#a7a49c"></div><div class="a" style="left:4px;top:688px;width:952px;height:23px;background:linear-gradient(#eceae4,#d8d4cc 85%,#cfcbc2)"></div>
<div class="a" style="left:763px;top:690px;width:1px;height:16px;background:#a0a0a0"></div>
<div class="t" style="left:788px;top:692px">Nebyla spuštěna žádná operace.</div>

<svg style="left:770px;top:691px" width="16" height="15"><rect x="4" y="4" width="11" height="10" fill="#f2e6b4" stroke="#6b7690" stroke-width="0.8"/><path d="M5 13L14 5V13Z" fill="#5ba04a" opacity="0.6"/><circle cx="5" cy="5" r="4.5" fill="#b3b6e6" stroke="#7f84c0" stroke-width="0.6"/><path d="M3 5H7" stroke="#fff" stroke-width="1"/></svg>
<svg style="left:944px;top:699px" width="11" height="11"><g fill="#fff"><rect x="8" y="1" width="2" height="2"/><rect x="5" y="4" width="2" height="2"/><rect x="8" y="4" width="2" height="2"/><rect x="2" y="7" width="2" height="2"/><rect x="5" y="7" width="2" height="2"/><rect x="8" y="7" width="2" height="2"/></g><g fill="#a9a59a"><rect x="9" y="2" width="1" height="1"/><rect x="6" y="5" width="1" height="1"/><rect x="9" y="5" width="1" height="1"/><rect x="3" y="8" width="1" height="1"/><rect x="6" y="8" width="1" height="1"/><rect x="9" y="8" width="1" height="1"/></g></svg>
</body></html>
